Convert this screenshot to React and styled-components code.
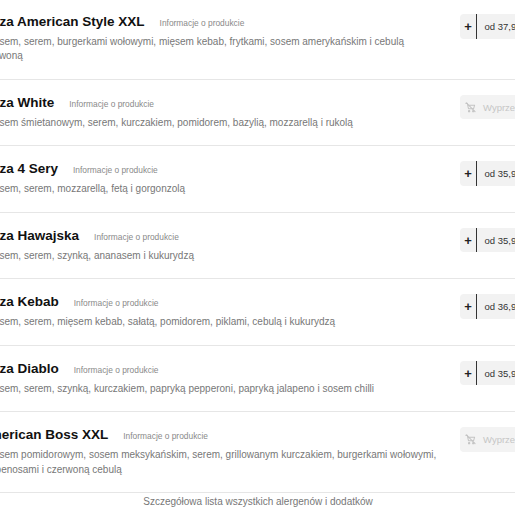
import styled, {createGlobalStyle} from 'styled-components'

const GlobalStyle = createGlobalStyle`
  html, body {
    margin: 0;
    padding: 0;
    background: #fff;
    overflow: hidden;
  }

  body {
    font-family: "Liberation Sans", Arial, sans-serif;
  }
`

const pizzas = [
    {
        name: 'Pizza American Style XXL',
        desc: 'Z sosem, serem, burgerkami wołowymi, mięsem kebab, frytkami, sosem amerykańskim i cebulą czerwoną',
        price: '37,90',
    },
    {
        name: 'Pizza White',
        desc: 'Z sosem śmietanowym, serem, kurczakiem, pomidorem, bazylią, mozzarellą i rukolą',
        soldOut: true,
    },
    {
        name: 'Pizza 4 Sery',
        desc: 'Z sosem, serem, mozzarellą, fetą i gorgonzolą',
        price: '35,90',
    },
    {
        name: 'Pizza Hawajska',
        desc: 'Z sosem, serem, szynką, ananasem i kukurydzą',
        price: '35,90',
    },
    {
        name: 'Pizza Kebab',
        desc: 'Z sosem, serem, mięsem kebab, sałatą, pomidorem, piklami, cebulą i kukurydzą',
        price: '36,90',
    },
    {
        name: 'Pizza Diablo',
        desc: 'Z sosem, serem, szynką, kurczakiem, papryką pepperoni, papryką jalapeno i sosem chilli',
        price: '35,90',
    },
    {
        name: 'American Boss XXL',
        desc: 'Z sosem pomidorowym, sosem meksykańskim, serem, grillowanym kurczakiem, burgerkami wołowymi, jalapenosami i czerwoną cebulą',
        soldOut: true,
    },
]

function SoldOutIcon() {
    return (
        <svg width="11" height="11" viewBox="0 0 24 24" fill="none" stroke="#c4c4c4" strokeWidth="2.2"
             strokeLinecap="round" strokeLinejoin="round">
            <circle cx="9" cy="20" r="1.5"/>
            <circle cx="18" cy="20" r="1.5"/>
            <path d="M2 3h3l2.6 11.5h11.2L21 7H7"/>
            <path d="M3 2l19 19"/>
        </svg>
    )
}

export default function App() {
    return (
        <>
            <GlobalStyle/>
            <Menu>
                {pizzas.map((p) => (
                    <Row key={p.name}>
                        <Info>
                            <TitleLine>
                                <Name>{p.name}</Name>
                                <ProductLink>Informacje o produkcie</ProductLink>
                            </TitleLine>
                            <Desc>{p.desc}</Desc>
                        </Info>
                        {p.soldOut ? (
                            <SoldOut>
                                <SoldOutIcon/>
                                <span>Wyprzedane</span>
                            </SoldOut>
                        ) : (
                            <AddButton>
                                <Plus>+</Plus>
                                <Price>od {p.price} zł</Price>
                            </AddButton>
                        )}
                    </Row>
                ))}
                <Footer>Szczegółowa lista wszystkich alergenów i dodatków</Footer>
            </Menu>
        </>
    )
}

const Menu = styled.div`
  width: 556px;
  margin: -1.3px 0 0 -20px;
`

const Row = styled.div`
  display: flex;
  align-items: flex-start;
  gap: 18px;
  padding: 15px 0 14.8px;
  border-bottom: 1px solid #e6e6e6;
`

const Info = styled.div`
  width: 462px;
  flex-shrink: 0;
`

const TitleLine = styled.div`
  display: flex;
  align-items: baseline;
  gap: 15px;
  height: 15px;
`

const Name = styled.span`
  font-size: 13.5px;
  line-height: 15px;
  font-weight: bold;
  color: #111;
`

const ProductLink = styled.span`
  font-size: 8.4px;
  line-height: 9px;
  color: #8a8a8a;
`

const Desc = styled.div`
  margin-top: 6.2px;
  font-size: 10px;
  line-height: 14.5px;
  color: #777;
`

const ButtonBase = styled.div`
  display: flex;
  align-items: center;
  height: 24.5px;
  margin-top: 0.3px;
  border-radius: 4px;
  background: #f2f2f2;
  white-space: nowrap;
  flex-shrink: 0;
`

const AddButton = styled(ButtonBase)``

const Plus = styled.span`
  display: flex;
  align-items: center;
  justify-content: center;
  width: 17px;
  height: 100%;
  border-right: 1px solid #333;
  box-sizing: border-box;
  font-size: 13px;
  font-weight: bold;
  color: #222;
`

const Price = styled.span`
  padding: 0 8px 0 7.5px;
  font-size: 9.5px;
  color: #333;
`

const SoldOut = styled(ButtonBase)`
  gap: 7px;
  padding: 0 8px 0 5px;
  background: #f3f3f3;
  font-size: 9.5px;
  color: #c6c6c6;
`

const Footer = styled.div`
  padding-top: 2.5px;
  text-align: center;
  font-size: 10px;
  line-height: 12px;
  color: #777;
`
